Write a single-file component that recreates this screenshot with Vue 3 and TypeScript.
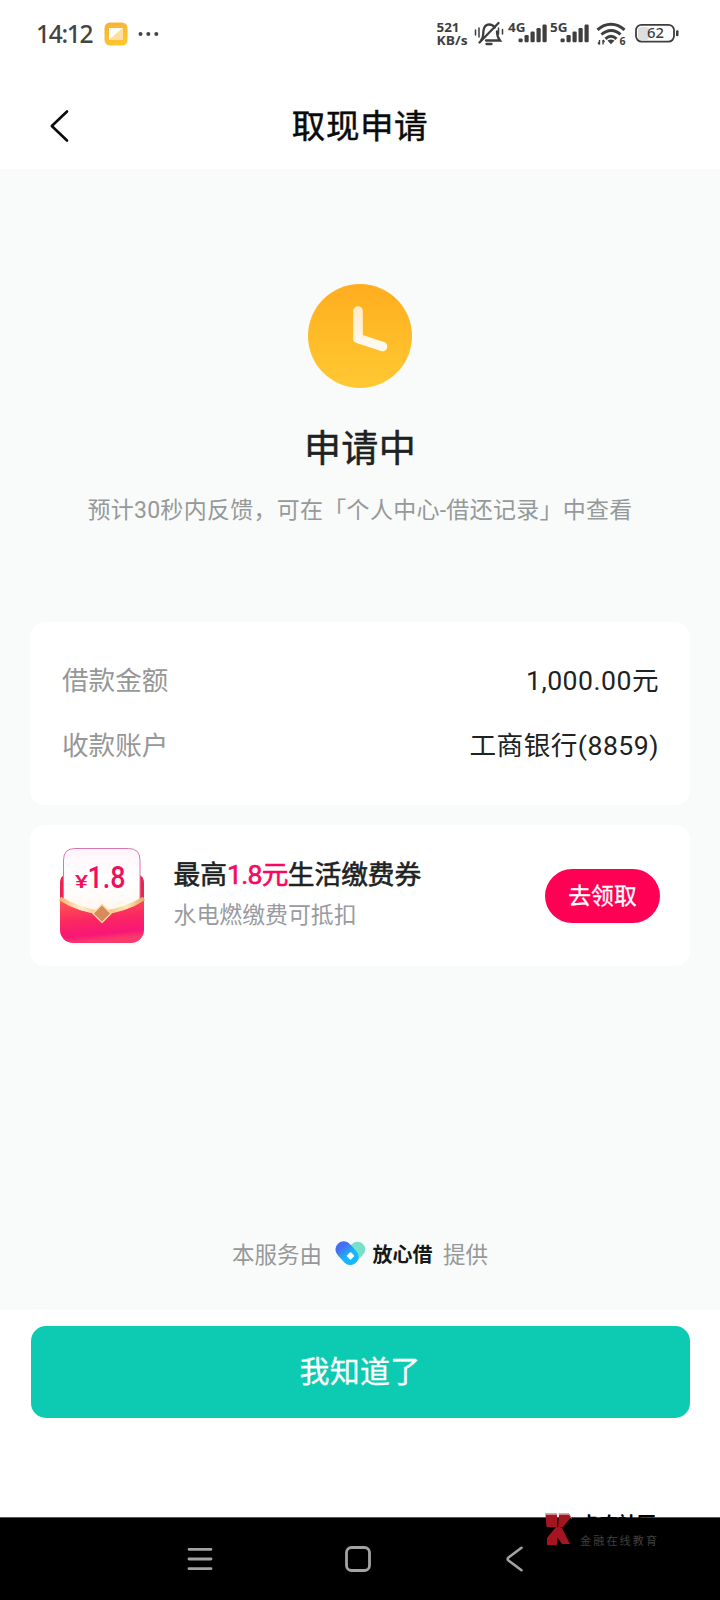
<script setup lang="ts">
interface DetailRow {
  label: string
  value: string
}

const rows: DetailRow[] = [
  { label: '借款金额', value: '1,000.00元' },
  { label: '收款账户', value: '工商银行(8859)' },
]

const signalBars = [0, 1, 2, 3, 4]
</script>

<template>
  <div class="screen">
    <header class="status">
      <span class="time">14:12</span>
      <svg class="app-badge" width="24" height="24" viewBox="0 0 24 24">
        <defs>
          <linearGradient id="badge" x1="0" y1="0" x2="0.4" y2="1">
            <stop offset="0" stop-color="#f6b03c" />
            <stop offset="1" stop-color="#fdc52e" />
          </linearGradient>
        </defs>
        <rect x="0.5" y="0.5" width="23" height="23" rx="5.5" fill="url(#badge)" />
        <path d="M19 6V18H5Z" fill="#fde0a0" />
        <path d="M5 6H19L5 18Z" fill="#fffdf6" />
      </svg>
      <svg class="dots" width="22" height="6" viewBox="0 0 22 6" fill="#444">
        <circle cx="2.500" cy="3" r="2" />
        <circle cx="10.300" cy="3" r="2" />
        <circle cx="18.300" cy="3" r="2" />
      </svg>
      <svg class="indicators" width="250" height="40" viewBox="433 14 250 40" fill="#3e3e3e">
        <g class="tiny">
          <text x="436.5" y="32" font-size="12.8" textLength="23" lengthAdjust="spacingAndGlyphs">521</text>
          <text x="436.5" y="44.8" font-size="12.8" textLength="31" lengthAdjust="spacingAndGlyphs">KB/s</text>
          <text x="508" y="32" font-size="12.5" textLength="17.5" lengthAdjust="spacingAndGlyphs">4G</text>
          <text x="550" y="32" font-size="12.5" textLength="17.5" lengthAdjust="spacingAndGlyphs">5G</text>
          <text x="619.5" y="45" font-size="10.5">6</text>
        </g>
        <g fill="none" stroke="#3e3e3e" stroke-width="2.300" stroke-linecap="round">
          <path d="M481 40.5C484 37 483 34 483.5 30.500C484.200 26 486 24.500 489 24.500C491.500 24.500 493.500 25.500 494.800 27.500M497 31.500C497 35.500 498 38 500 40.500H486" />
          <path d="M479.500 42.500L498.500 23" />
          <path d="M486.500 44H491.500" />
          <path d="M475.500 30V35M479 28V37M498.500 28V34M502.500 29.500V34" stroke-width="1.500" />
        </g>
        <g v-for="i in signalBars" :key="i">
          <rect :x="518.500 + i * 6" :y="38.500 - i * 3.500" width="4.200" :height="3.800 + i * 3.500" rx="1.200" />
          <rect :x="560.500 + i * 6" :y="38.500 - i * 3.500" width="4.200" :height="3.800 + i * 3.500" rx="1.200" />
        </g>
        <g fill="none" stroke="#3e3e3e" stroke-width="3">
          <path d="M597.500 29.800C605.500 22.300 616.500 22.300 624.500 29.800" />
          <path d="M601.500 34.500C607.500 29 615 29 620.500 34.500" />
          <path d="M605.500 38.800C609 35.600 613 35.600 616.500 38.800" />
        </g>
        <path d="M607.500 40.500Q611 38.500 614.500 40.500L611 44.200Z" />
        <path d="M599.500 40V44.500M603 40V44.500M598 42.500L599.500 44.500M603 40L604.500 42" fill="none" stroke="#3e3e3e" stroke-width="1.400" />
        <rect x="638" y="27" width="11" height="13" rx="3" fill="#dedede" />
        <rect x="636" y="24.800" width="38" height="16.800" rx="5.500" fill="none" stroke="#3e3e3e" stroke-width="1.800" />
        <rect x="676" y="30.300" width="2.500" height="6" rx="1" />
        <text class="charge" x="647" y="38.300" font-size="13.500" textLength="17" lengthAdjust="spacingAndGlyphs">62</text>
      </svg>
    </header>

    <nav class="titlebar">
      <svg class="back" width="22" height="34" viewBox="0 0 22 34" fill="none" stroke="#0b0b0b" stroke-width="2.600" stroke-linecap="round" stroke-linejoin="round">
        <path d="M18 2.500L2.800 17L18 31.500" />
      </svg>
      <h1>取现申请</h1>
    </nav>

    <main class="content">
      <svg class="clock" width="104" height="104" viewBox="0 0 104 104">
        <defs>
          <linearGradient id="clock" x1="0" y1="0" x2="0" y2="1">
            <stop offset="0" stop-color="#ffad1e" />
            <stop offset="1" stop-color="#ffc933" />
          </linearGradient>
          <linearGradient id="hands" x1="0" y1="0" x2="0" y2="1">
            <stop offset="0" stop-color="#ffeccb" />
            <stop offset="1" stop-color="#fffaf0" />
          </linearGradient>
        </defs>
        <circle cx="52" cy="52" r="52" fill="url(#clock)" />
        <path d="M50 27V54.500L74.500 62.500" fill="none" stroke="url(#hands)" stroke-width="9.600" stroke-linecap="round" stroke-linejoin="round" />
      </svg>
      <h2>申请中</h2>
      <p class="hint">预计30秒内反馈，可在「个人中心-借还记录」中查看</p>

      <section class="card details">
        <div v-for="row in rows" :key="row.label" class="row">
          <span class="label">{{ row.label }}</span>
          <span class="value">{{ row.value }}</span>
        </div>
      </section>

      <section class="card coupon">
        <svg class="envelope" width="86" height="98" viewBox="0 0 86 98">
          <defs>
            <linearGradient id="pocket" x1="0" y1="0" x2="0.200" y2="1">
              <stop offset="0" stop-color="#ff5b52" />
              <stop offset="0.500" stop-color="#fb2860" />
              <stop offset="0.850" stop-color="#f81677" />
              <stop offset="1" stop-color="#fb3a6c" />
            </linearGradient>
            <linearGradient id="sheet" x1="0" y1="0" x2="0" y2="1">
              <stop offset="0" stop-color="#fff5fb" />
              <stop offset="0.500" stop-color="#fff" />
              <stop offset="1" stop-color="#fff4ec" />
            </linearGradient>
            <linearGradient id="gold" x1="0" y1="0" x2="1" y2="0">
              <stop offset="0" stop-color="#f3b56f" />
              <stop offset="0.250" stop-color="#fff0cf" />
              <stop offset="0.500" stop-color="#f4b870" />
              <stop offset="0.800" stop-color="#ffe6b8" />
              <stop offset="1" stop-color="#eba45f" />
            </linearGradient>
          </defs>
          <path d="M1 36Q1 29 6 28H80Q85 29 85 36V62H1Z" fill="#ee2450" />
          <path d="M4.500 60V13Q4.500 1.500 16 1.500H69.500Q81 1.500 81 13V60L43 72Z" fill="url(#sheet)" stroke="#d979ab" stroke-width="1" />
          <path d="M1 53Q20 66 43 66T85 53V83A13 13 0 0 1 72 96H14A13 13 0 0 1 1 83Z" fill="url(#pocket)" />
          <path d="M1 51.500Q20 63 43 66Q66 63 85 51.500" fill="none" stroke="url(#gold)" stroke-width="4" />
          <path d="M43 57.500L52 66.500L43 75.500L34 66.500Z" fill="#d68b5b" stroke="#ffd9a0" stroke-width="1.300" stroke-linejoin="round" />
          <text class="yen" x="16" y="40.500" font-size="19" textLength="13" lengthAdjust="spacingAndGlyphs">¥</text>
          <text class="sum" x="28.500" y="41" font-size="31" textLength="38" lengthAdjust="spacingAndGlyphs">1.8</text>
        </svg>
        <div class="coupon-text">
          <p class="coupon-title">最高<em>1.8元</em>生活缴费券</p>
          <p class="coupon-sub">水电燃缴费可抵扣</p>
        </div>
        <button class="claim">去领取</button>
      </section>

      <footer class="provider">
        <span>本服务由</span>
        <svg class="heart" width="31" height="25" viewBox="0 0 31 25">
          <defs>
            <linearGradient id="lobe" gradientUnits="userSpaceOnUse" x1="3" y1="3" x2="18" y2="22">
              <stop offset="0.200" stop-color="#486df3" />
              <stop offset="0.650" stop-color="#16b8fa" />
            </linearGradient>
          </defs>
          <path d="M22.500 8.500L15 16" stroke="#78dfca" stroke-width="15.500" stroke-linecap="round" />
          <path d="M8.700 8.500L15.300 15.800" stroke="url(#lobe)" stroke-width="16.500" stroke-linecap="round" />
          <rect x="12.600" y="12" width="5.800" height="5.800" rx="1" fill="#fff" transform="rotate(45 15.500 14.900)" />
        </svg>
        <strong>放心借</strong>
        <span>提供</span>
      </footer>
    </main>

    <div class="action">
      <button class="confirm">我知道了</button>
    </div>

    <div class="system-nav">
      <svg width="26" height="26" viewBox="0 0 26 26" fill="none" stroke="#a3a3a3" stroke-width="2.800" stroke-linecap="round">
        <path d="M2 3.300H24M2 13H24M2 22.700H24" />
      </svg>
      <svg width="26" height="26" viewBox="0 0 26 26" fill="none" stroke="#a3a3a3" stroke-width="2.800">
        <rect x="1.500" y="1.500" width="23" height="23" rx="5" />
      </svg>
      <svg width="26" height="26" viewBox="0 0 26 26" fill="none" stroke="#a3a3a3" stroke-width="2.600" stroke-linecap="round" stroke-linejoin="round">
        <path d="M19.500 1.800L6.500 11.500Q4.700 13 6.500 14.500L19.500 24.200" />
      </svg>
    </div>

    <div class="watermark">
      <svg width="28" height="34" viewBox="0 0 28 34">
        <path d="M1.500 1.500H13V14H2.500ZM15 1.500H25.500L26.500 5L19 14L14 15ZM3 25L12 14L18 15L26 31H18L13 24V32H3Z" fill="#a51521" />
        <path d="M1 0.800H13M14.500 0.800H25L27.500 5.500" fill="none" stroke="#b88" stroke-width="1" />
      </svg>
      <div class="watermark-text">
        <span class="mark-name">卡农社区</span>
        <span class="mark-line">金融在线教育</span>
      </div>
    </div>
  </div>
</template>

<style>
body {
  margin: 0;
}
</style>

<style scoped>
.screen {
  position: relative;
  width: 720px;
  height: 1600px;
  overflow: hidden;
  display: flex;
  flex-direction: column;
  background: #fff;
  color: #202222;
  font-family: Roboto, 'Noto Sans CJK SC', sans-serif;
}

h1,
h2,
p {
  margin: 0;
  font-weight: 400;
}

button {
  border: 0;
  padding: 0;
  font-family: inherit;
  color: #fff;
}

.status {
  height: 67px;
  display: flex;
  align-items: center;
  box-sizing: border-box;
  padding: 0 37px 0 36px;
  color: #444;
}

.time {
  width: 67.500px;
  margin-top: -1px;
  font-family: 'Noto Sans', sans-serif;
  font-size: 24.500px;
  font-weight: 500;
  letter-spacing: -1.300px;
}

.dots {
  margin-left: 10px;
}

.indicators {
  margin-left: auto;
}

.tiny {
  font-family: 'Open Sans', sans-serif;
  font-weight: 700;
}

.charge {
  font-family: 'Noto Sans', sans-serif;
  font-weight: 500;
}

.titlebar {
  height: 102px;
  display: grid;
  grid-template-columns: 100px 1fr 100px;
  align-items: center;
  box-sizing: border-box;
  padding-top: 16px;
}

.back {
  justify-self: start;
  margin-left: 49px;
}

.titlebar h1 {
  padding-top: 2px;
  text-align: center;
  color: #0b0b0b;
  font-size: 33.500px;
  line-height: 50px;
  letter-spacing: 0.600px;
  -webkit-text-stroke: 0.500px currentColor;
}

.content {
  height: 1141px;
  display: flex;
  flex-direction: column;
  align-items: center;
  background: #f9fbfa;
}

.clock {
  flex: none;
  margin-top: 114.500px;
}

.content h2 {
  margin-top: 33px;
  font-size: 37px;
  line-height: 58px;
  letter-spacing: 0.400px;
  -webkit-text-stroke: 0.500px currentColor;
}

.hint {
  margin-top: 15px;
  color: #969999;
  font-size: 23px;
  line-height: 34px;
  letter-spacing: 0.280px;
  white-space: nowrap;
}

.card {
  width: 660px;
  box-sizing: border-box;
  border-radius: 15px;
  background: #fff;
}

.details {
  margin-top: 94px;
  height: 183px;
  padding: 24px 31px 0 32px;
}

.row {
  height: 65px;
  display: flex;
  justify-content: space-between;
  align-items: center;
  font-size: 26.600px;
}

.label {
  color: #969797;
}

.value {
  letter-spacing: 0.500px;
}

.coupon {
  margin-top: 20px;
  height: 141px;
  display: flex;
  align-items: center;
  padding: 0 30px 0 29px;
}

.envelope {
  margin-top: 1px;
}

.coupon-text {
  flex: 1;
  margin: 2px 0 0 28.500px;
}

.coupon-title {
  font-size: 26.700px;
  line-height: 39px;
  white-space: nowrap;
  -webkit-text-stroke: 0.600px currentColor;
}

.coupon-title em {
  color: #f6095e;
  font-style: normal;
  letter-spacing: -0.700px;
}

.coupon-sub {
  color: #999ba1;
  font-size: 22.900px;
  line-height: 41px;
}

.yen,
.sum {
  fill: #f20d5d;
  font-weight: 500;
}

.claim {
  width: 115px;
  height: 54px;
  margin-top: 1px;
  padding-top: 1px;
  border-radius: 27px;
  background: #ff0054;
  font-size: 22.800px;
  line-height: 53px;
  -webkit-text-stroke: 0.300px currentColor;
}

.provider {
  display: flex;
  align-items: center;
  align-self: stretch;
  margin-top: 267.500px;
  padding-left: 232px;
  height: 40px;
  color: #969899;
  font-size: 22.500px;
}

.heart {
  margin: 0 7px 0 12.500px;
}

.provider strong {
  margin-right: 10.500px;
  color: #151818;
  font-size: 20px;
  font-weight: 700;
}

.action {
  height: 207px;
  display: flex;
  justify-content: center;
  align-items: flex-start;
}

.confirm {
  width: 659px;
  height: 92px;
  margin-top: 15.500px;
  border-radius: 15px;
  background: #0ccbb2;
  font-size: 30px;
  letter-spacing: 0.300px;
  line-height: 92px;
  -webkit-text-stroke: 0.300px currentColor;
}

.system-nav {
  height: 83px;
  display: flex;
  justify-content: center;
  align-items: center;
  gap: 131.500px;
  background: #000;
  box-sizing: border-box;
  padding-right: 5px;
  border-top: 1px solid #555;
}

.watermark {
  position: absolute;
  left: 544px;
  top: 1513px;
  display: flex;
}

.watermark-text {
  display: flex;
  flex-direction: column;
  margin-left: 8px;
}

.mark-name {
  height: 20px;
  color: #000;
  font-size: 19px;
  font-weight: 700;
  line-height: 24px;
}

.mark-line {
  color: #414141;
  font-size: 11px;
  line-height: 18px;
  letter-spacing: 2.200px;
}
</style>
